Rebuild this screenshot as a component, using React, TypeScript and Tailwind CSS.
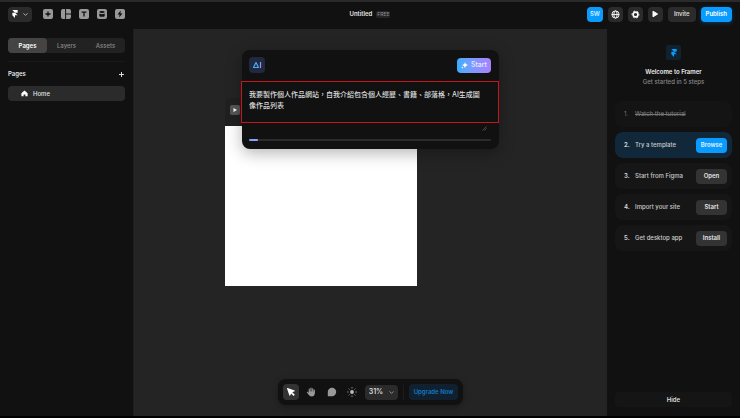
import { useState } from 'react';
import { ChevronDown } from 'lucide-react';

type StepItem = { id: number; label: string; action?: string; done?: boolean; active?: boolean };

const STEPS: StepItem[] = [
  { id: 1, label: 'Watch the tutorial', done: true },
  { id: 2, label: 'Try a template', action: 'Browse', active: true },
  { id: 3, label: 'Start from Figma', action: 'Open' },
  { id: 4, label: 'Import your site', action: 'Start' },
  { id: 5, label: 'Get desktop app', action: 'Install' },
];

const TABS = ['Pages', 'Layers', 'Assets'];

// Each insert icon is a filled rounded tile with the glyph cut out in the bar colour
const INSERT_TOOLS = [
  { name: 'Insert', glyph: <path d="M5 2.5v5M2.5 5h5" stroke="#111" strokeWidth="1.3" /> },
  { name: 'Layout', glyph: <path d="M4.6 0v10M4.6 5H10" stroke="#111" strokeWidth="1" /> },
  { name: 'Text', glyph: <path d="M2.6 3.2h4.8M5 3.2v4.4" stroke="#111" strokeWidth="1.3" /> },
  {
    name: 'CMS',
    glyph: (
      <>
        <ellipse cx="5" cy="3" rx="2.7" ry="1.1" fill="#111" />
        <path d="M2.3 4.6c1 .8 4.4.8 5.4 0v2.3c-1 1.2-4.4 1.2-5.4 0z" fill="#111" />
      </>
    ),
  },
  { name: 'Actions', glyph: <path d="M5.7 1.5 2.5 5.6h2L4.2 8.5l3.3-4.1h-2z" fill="#111" /> },
];

function FramerLogo({ className }: { className: string }) {
  return (
    <svg viewBox="0 0 14 21" className={className} fill="currentColor" aria-hidden="true">
      <path d="M0 0h14v7H7zM0 7h7l7 7H0zM0 14h7v7z" />
    </svg>
  );
}

function TopBar() {
  return (
    <header className="grid h-[29px] shrink-0 grid-cols-3 items-center border-t-2 border-[#2a2a2a] bg-[#111] px-2 pb-[3px]">
      <div className="flex items-center gap-2">
        <button aria-label="Main menu" className="mr-[3px] flex h-[15px] w-6 items-center justify-center gap-1 rounded-sm bg-[#2b2b2b] text-white">
          <FramerLogo className="h-2 w-[6px]" />
          <ChevronDown size={7} strokeWidth={3} className="text-[#bbb]" />
        </button>
        {INSERT_TOOLS.map(tool => (
          <button key={tool.name} aria-label={tool.name}>
            <svg viewBox="0 0 10 10" className="size-[10px]" fill="none">
              <rect width="10" height="10" rx="2" fill="#999" />
              {tool.glyph}
            </svg>
          </button>
        ))}
      </div>

      <div className="flex items-center justify-center gap-1">
        <h1 className="font-semibold text-[#e4e4e4]">Untitled</h1>
        <span className="rounded-xs bg-[#242424] px-px text-[5px] leading-[7px] font-medium text-[#888]">FREE</span>
      </div>

      <div className="flex items-center justify-end gap-[5px]">
        <button className="h-[15px] w-4 rounded-sm bg-[#0a9bff] font-semibold text-[#d5eeff]">SW</button>
        <button aria-label="Language" className="flex size-[15px] items-center justify-center rounded-sm bg-[#2b2b2b]">
          <svg viewBox="0 0 10 10" className="size-[9px]" fill="none" stroke="#fff" strokeWidth="1">
            <circle cx="5" cy="5" r="4" />
            <ellipse cx="5" cy="5" rx="1.8" ry="4" />
            <path d="M1 5h8" />
          </svg>
        </button>
        <button aria-label="Settings" className="flex size-[15px] items-center justify-center rounded-sm bg-[#2b2b2b]">
          <svg viewBox="0 0 10 10" className="size-[9px]" fill="none" stroke="#fff">
            <circle cx="5" cy="5" r="2.7" strokeWidth="1.8" />
            <circle cx="5" cy="5" r="3.9" strokeWidth="1" strokeDasharray="2.04 2.04" strokeDashoffset="1" />
          </svg>
        </button>
        <button aria-label="Preview" className="flex size-[15px] items-center justify-center rounded-sm bg-[#2b2b2b]">
          <svg viewBox="0 0 8 8" className="size-[8px]" fill="#fff" stroke="#fff" strokeLinejoin="round">
            <path d="M2 1.2 6.6 4 2 6.8z" />
          </svg>
        </button>
        <button className="h-[15px] rounded-sm bg-[#2b2b2b] px-[6px] font-medium text-[#e4e4e4]">Invite</button>
        <button className="h-[15px] rounded-sm bg-[#0a9bff] px-[5px] font-semibold text-white shadow-[0_1px_4px_rgba(0,153,255,0.3)]">Publish</button>
      </div>
    </header>
  );
}

function PagesPanel() {
  const [tab, setTab] = useState('Pages');

  return (
    <aside className="w-[134px] shrink-0 border-r border-[#1e1e1e] bg-[#111] px-2 pt-[9px]">
      <div className="grid grid-cols-3 rounded-sm bg-[#222]">
        {TABS.map(name => (
          <button
            key={name}
            onClick={() => setTab(name)}
            className={`h-[15px] rounded-sm ${tab === name ? 'bg-[#444] font-semibold text-white' : 'font-medium text-[#888]'}`}
          >
            {name}
          </button>
        ))}
      </div>

      <div className="mt-2 flex items-center justify-between border-t border-[#191919] pt-[7px]">
        <h2 className="font-semibold text-[#e4e4e4]">Pages</h2>
        <button aria-label="Add page">
          <svg viewBox="0 0 7 7" className="size-[7px]" stroke="#ddd" strokeWidth="1">
            <path d="M3.5 1v5M1 3.5h5" />
          </svg>
        </button>
      </div>

      <a href="#home" className="mt-[7px] flex h-[15px] items-center gap-[5px] rounded-sm bg-[#2b2b2b] pl-[13px] font-medium text-[#e4e4e4]">
        <svg viewBox="0 0 7 7" className="size-[7px]" fill="#fff" aria-hidden="true">
          <path d="M3.5.5 6.6 3.2v3.1H4.4V4.6H2.6v1.7H.4V3.2z" />
        </svg>
        Home
      </a>
    </aside>
  );
}

function AiPrompt() {
  const [prompt, setPrompt] = useState('我要製作個人作品網站，自我介紹包含個人經歷、書籍、部落格，AI生成圖像作品列表');

  return (
    <section className="relative w-[257px] rounded-lg bg-[#111] pt-[7px] pr-2 pb-2 pl-[7px] shadow-[0_4px_16px_rgba(0,0,0,0.3)]">
      <div className="flex items-center justify-between">
        <span className="flex size-4 items-center justify-center rounded-sm bg-[#20293f]">
          <svg viewBox="0 0 10 8" className="h-2 w-[10px]" fill="none" strokeWidth="1.2">
            <path d="M1.5 6.5 4 1.5l2.5 5z" stroke="#45adf5" strokeLinejoin="round" />
            <path d="M8.5 1v6" stroke="#a28bff" />
          </svg>
        </span>
        <button className="flex h-[15px] items-center gap-[3px] rounded-sm bg-linear-to-r from-[#34adff] to-[#a780ff] px-1 text-[7px] font-medium text-[#e8e8ff]">
          <svg viewBox="0 0 7 7" className="size-[7px]" fill="#fff" aria-hidden="true">
            <path d="M4 0q.3 2.7 3 3-2.7.5-3 3.2-.3-2.7-3.2-3.2Q3.7 2.7 4 0zM1.3 4.4q.1.9 1.1 1.1-1 .2-1.1 1.3Q1.2 5.7.1 5.5q1.1-.2 1.2-1.1z" />
          </svg>
          Start
        </button>
      </div>

      <div className="relative mt-2">
        <textarea
          aria-label="Describe your site"
          value={prompt}
          onChange={e => setPrompt(e.target.value)}
          className="block h-[50px] w-full resize-none bg-transparent pt-2 pr-2 font-['Inter','Noto_Sans_CJK_TC',sans-serif] text-[7px] leading-[11px] font-medium text-[#ddd] outline-none"
        />
        {/* Highlight around the prompt */}
        <div className="pointer-events-none absolute -inset-x-2 top-0 h-[42px] border border-[#c8141c]" />
        <svg viewBox="0 0 5 5" className="absolute right-1 bottom-0 size-[5px]" stroke="#777" strokeWidth=".6">
          <path d="M.5 4.5 4.5.5M2.5 4.5l2-2" />
        </svg>
      </div>

      <div className="mt-2 h-0.5 rounded-full bg-[#2b2b2b]">
        <div className="h-full w-[9px] rounded-full bg-linear-to-r from-[#5aa8ff] to-[#a79aff]" />
      </div>
    </section>
  );
}

function Toolbar() {
  return (
    <nav className="flex h-[26px] items-center rounded-lg bg-[#111] px-[5px] shadow-[0_2px_6px_rgba(0,0,0,0.3)]">
      <button aria-label="Select" className="flex size-4 items-center justify-center rounded-sm bg-[#333]">
        <svg viewBox="0 0 10 10" className="size-[10px]" fill="#fff">
          <path d="M1 1.6q-.2-.8.6-.6l7 2.4q.8.4 0 .8L6.3 5.2l2.5 2.5-1.2 1.2-2.5-2.5-.9 2.1q-.4.7-.8 0z" />
        </svg>
      </button>
      <button aria-label="Hand" className="flex w-[25px] justify-center">
        <svg viewBox="0 0 10 10" className="size-[10px]" fill="#999" stroke="#999" strokeLinecap="round">
          <path d="M3.3 5V2M5 5V1.2M6.7 5V1.8M8.3 5V3M1.5 5.3 3 7" strokeWidth="1.2" />
          <path d="M2.8 4.5h6v2q-.2 3-3.2 3-2 0-3-2z" stroke="none" />
        </svg>
      </button>
      <button aria-label="Comment" className="flex w-4 justify-center">
        <svg viewBox="0 0 10 10" className="size-[10px]" fill="#999">
          <path d="M5 .8a4.2 4.2 0 1 1 0 8.4H1.3q-.5 0-.5-.5V5A4.2 4.2 0 0 1 5 .8z" />
        </svg>
      </button>
      <button aria-label="Theme" className="flex w-[25px] justify-center">
        <svg viewBox="0 0 10 10" className="size-[10px]" stroke="#aaa" strokeLinecap="round">
          <circle cx="5" cy="5" r="1.9" fill="#bbb" stroke="none" />
          <path d="M5 .7v.4M5 8.9v.4M.7 5h.4M8.9 5h.4M2 2l.2.2M7.8 7.8l.2.2M8 2l-.2.2M2.2 7.8 2 8" />
        </svg>
      </button>
      <div className="relative">
        <select aria-label="Zoom" className="h-[15px] w-[33px] appearance-none rounded-sm bg-[#2b2b2b] pl-1 text-[7px] font-semibold text-[#ddd]" defaultValue="31%">
          <option>31%</option>
          <option>50%</option>
          <option>100%</option>
        </select>
        <ChevronDown size={7} strokeWidth={3} className="pointer-events-none absolute top-1 right-[3px] text-[#999]" />
      </div>
      <span className="mx-[5px] h-[15px] w-px bg-[#1c1c1c]" />
      <button className="h-4 rounded-sm bg-[#11202e] px-[5px] font-semibold text-[#1179c4]">Upgrade Now</button>
    </nav>
  );
}

function Canvas() {
  return (
    <main className="relative min-w-0 flex-1 overflow-hidden bg-[#242424]">
      {/* Artboard */}
      <div className="absolute top-[69px] left-[91px] w-48">
        <div className="flex h-7 items-center rounded-t-md bg-[#202020] px-[5px] pb-1">
          <button aria-label="Play" className="flex size-[10px] items-center justify-center rounded-xs bg-[#555]">
            <svg viewBox="0 0 6 6" className="size-[6px]" fill="#fff">
              <path d="M1.5 1 5 3 1.5 5z" />
            </svg>
          </button>
        </div>
        <div className="h-40 bg-white" />
      </div>

      <div className="absolute inset-x-0 top-[21px] flex justify-center">
        <AiPrompt />
      </div>
      <div className="absolute inset-x-0 bottom-[11px] flex justify-center">
        <Toolbar />
      </div>
    </main>
  );
}

function StepRow({ step }: { step: StepItem }) {
  return (
    <li
      className={`flex h-[26px] items-center rounded-lg pr-[5px] pl-[9px] ${
        step.active ? 'bg-[#11283a]' : step.done ? 'bg-[#141414]' : 'bg-[#161616]'
      }`}
    >
      <span className={`w-[11px] ${step.done ? 'text-[#777]' : 'font-semibold text-[#ddd]'}`}>{step.id}.</span>
      <span className={`flex-1 font-medium ${step.done ? 'text-[#777] line-through' : 'text-[#ccc]'}`}>{step.label}</span>
      {step.action && (
        <button
          className={`h-[15px] w-[31px] rounded-sm font-semibold ${
            step.active ? 'bg-[#0a9bff] text-[#e0f3ff]' : 'bg-[#333] text-[#e4e4e4]'
          }`}
        >
          {step.action}
        </button>
      )}
    </li>
  );
}

function OnboardingPanel() {
  const [hidden, setHidden] = useState(false);

  return (
    <aside className="flex w-[133px] shrink-0 flex-col bg-[#111] px-2 pt-4 pb-[9px]">
      {!hidden && (
        <>
          <div className="flex flex-col items-center">
            <span className="flex size-[15px] items-center justify-center rounded-xs bg-[#11222f] text-[#0a9bff]">
              <FramerLogo className="h-2 w-[6px]" />
            </span>
            <h2 className="mt-[7px] font-semibold text-[#eee]">Welcome to Framer</h2>
            <p className="font-medium text-[#888]">Get started in 5 steps</p>
          </div>
          <ol className="mt-[14px] flex flex-col gap-[5px]">
            {STEPS.map(step => (
              <StepRow key={step.id} step={step} />
            ))}
          </ol>
        </>
      )}
      <button onClick={() => setHidden(!hidden)} className="mt-auto h-[15px] rounded-sm bg-[#151515] font-semibold text-[#ddd]">
        {hidden ? 'Show' : 'Hide'}
      </button>
    </aside>
  );
}

export default function App() {
  return (
    <div className="flex h-screen flex-col overflow-hidden border-b-2 border-black bg-[#111] font-['Inter',sans-serif] text-[6px] leading-[10px]">
      <TopBar />
      <div className="flex min-h-0 flex-1">
        <PagesPanel />
        <Canvas />
        <OnboardingPanel />
      </div>
    </div>
  );
}
